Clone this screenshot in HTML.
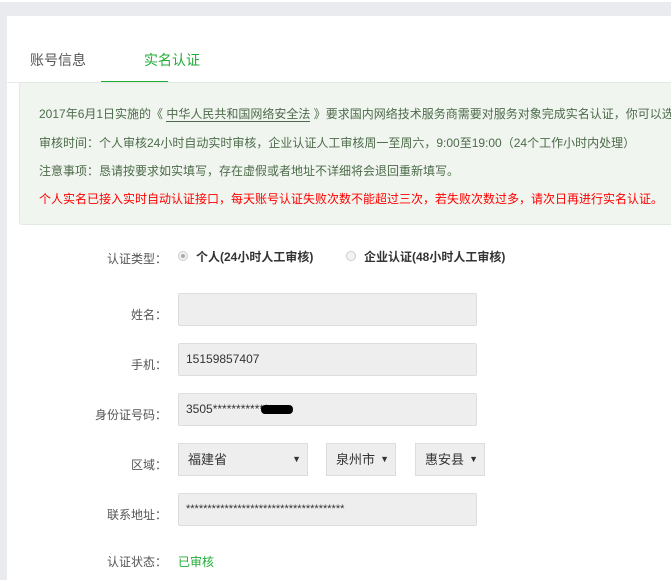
<!DOCTYPE html>
<html><head><meta charset="utf-8"><style>
body{margin:0;width:671px;height:580px;overflow:hidden;background:#e9ebee;font-family:"Liberation Sans","Noto Sans CJK SC",sans-serif;font-size:12px;color:#555;position:relative}
.top{position:absolute;left:0;top:0;width:671px;height:2px;background:#fff}
.panel{position:absolute;left:7px;top:16px;width:664px;height:564px;background:#fff}
.abs{position:absolute}
.tab{top:34px;font-size:14px}
.line{left:0;top:66px;width:664px;height:1px;background:#e8eaee}
.ul{left:94px;top:65px;width:67px;height:2px;background:#22ac38}
.note{left:12px;top:66px;width:660px;height:143px;background:#f0f6ef;border:1px solid #e1eae0;border-radius:3px;box-sizing:border-box}
.note div{position:absolute;left:19px;white-space:nowrap;color:#4d6b4a}
.lab{width:160px;text-align:right;left:0}
.inp{left:171px;width:299px;height:33px;background:#eee;border:1px solid #ddd;border-radius:2px;box-sizing:border-box;padding:0 7px;line-height:31px;color:#333}
.sel{height:33px;background:#eee;border:1px solid #ddd;box-sizing:border-box;padding:0 9px;line-height:31px;color:#333;font-size:13px}
.sel span{position:absolute;right:6px;top:0;font-size:9px}
.radio{width:10px;height:10px;border-radius:50%;border:1px solid #ccc;background:#f3f3f3;box-sizing:border-box}
</style></head><body>
<div class="top"></div>
<div class="panel">
<div class="abs tab" style="left:23px;color:#555">账号信息</div>
<div class="abs tab" style="left:137px;color:#22ac38">实名认证</div>
<div class="abs line"></div><div class="abs ul"></div>
<div class="abs note">
<div style="top:22px">2017年6月1日实施的《 <span style="border-bottom:1px solid #4d6b4a">中华人民共和国网络安全法</span> 》要求国内网络技术服务商需要对服务对象完成实名认证，你可以选</div>
<div style="top:51px">审核时间：个人审核24小时自动实时审核，企业认证人工审核周一至周六，9:00至19:00（24个工作小时内处理）</div>
<div style="top:79px">注意事项：恳请按要求如实填写，存在虚假或者地址不详细将会退回重新填写。</div>
<div style="top:107px;color:#f00">个人实名已接入实时自动认证接口，每天账号认证失败次数不能超过三次，若失败次数过多，请次日再进行实名认证。</div>
</div>
<div class="abs lab" style="top:234px">认证类型：</div>
<div class="abs radio" style="left:171px;top:235px"><div style="width:4px;height:4px;background:#aaa;border-radius:50%;margin:2px"></div></div>
<div class="abs" style="left:189px;top:232px;font-weight:bold;color:#333">个人(24小时人工审核)</div>
<div class="abs radio" style="left:339px;top:235px"></div>
<div class="abs" style="left:357px;top:232px;font-weight:bold;color:#333">企业认证(48小时人工审核)</div>
<div class="abs lab" style="top:290px">姓名：</div>
<div class="abs inp" style="top:277px"></div>
<div class="abs lab" style="top:340px">手机：</div>
<div class="abs inp" style="top:327px">15159857407</div>
<div class="abs lab" style="top:390px">身份证号码：</div>
<div class="abs inp" style="top:377px">3505************<span style="display:inline-block;width:32px;height:9px;background:#000;border-radius:4px;vertical-align:middle;margin-left:-8px"></span></div>
<div class="abs lab" style="top:440px">区域：</div>
<div class="abs sel" style="left:171px;top:427px;width:130px">福建省<span>▼</span></div>
<div class="abs sel" style="left:319px;top:427px;width:70px">泉州市<span>▼</span></div>
<div class="abs sel" style="left:408px;top:427px;width:70px">惠安县<span>▼</span></div>
<div class="abs lab" style="top:490px">联系地址：</div>
<div class="abs inp" style="top:477px;font-size:11px">*************************************</div>
<div class="abs lab" style="top:537px">认证状态：</div>
<div class="abs" style="left:171px;top:537px;color:#22ac38">已审核</div>
</div>
</body></html>
